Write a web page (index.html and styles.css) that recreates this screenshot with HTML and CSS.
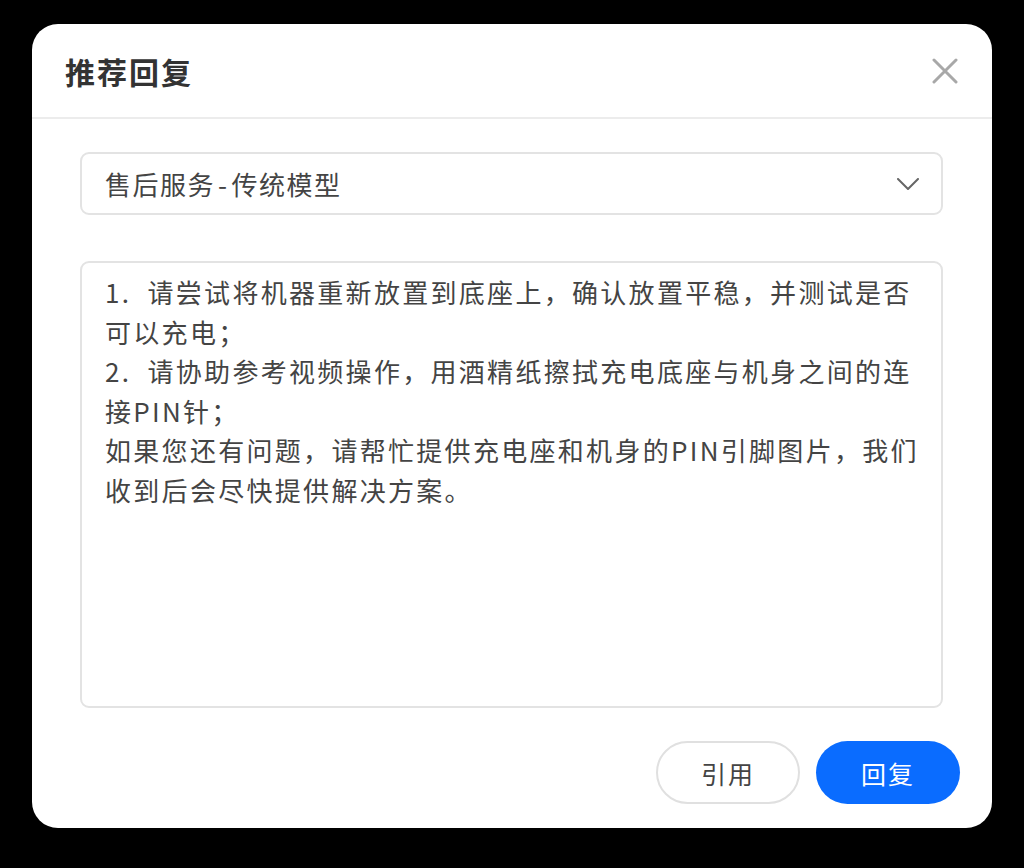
FILE: index.html
```html
<!DOCTYPE html>
<html lang="zh-CN">
<head>
<meta charset="utf-8">
<title>推荐回复</title>
<link rel="stylesheet" href="styles.css">
</head>
<body>
<div class="modal">
  <div class="modal-header">
    <h1 class="modal-title">推荐回复</h1>
    <button class="close-btn" aria-label="关闭">
      <svg width="26" height="26" viewBox="0 0 26 26"><path d="M2 2 L24 24 M24 2 L2 24" stroke="#a8a8a8" stroke-width="3" stroke-linecap="round" fill="none"/></svg>
    </button>
  </div>
  <div class="modal-body">
    <div class="select">
      <span class="select-value">售后服务<span class="dash">-</span>传统模型</span>
      <svg class="chevron" width="22" height="12" viewBox="0 0 22 12"><path d="M1 1 L11 11 L21 1" stroke="#666" stroke-width="2" fill="none" stroke-linecap="round" stroke-linejoin="round"/></svg>
    </div>
    <div class="reply-box">
      <p>1.&nbsp;&nbsp;请尝试将机器重新放置到底座上，确认放置平稳，并测试是否可以充电；</p>
      <p>2.&nbsp;&nbsp;请协助参考视频操作，用酒精纸擦拭充电底座与机身之间的连接PIN针；</p>
      <p>如果您还有问题，请帮忙提供充电座和机身的PIN引脚图片，我们收到后会尽快提供解决方案。</p>
    </div>
  </div>
  <div class="modal-footer">
    <button class="btn btn-default">引用</button>
    <button class="btn btn-primary">回复</button>
  </div>
</div>
</body>
</html>
```

FILE: styles.css
```css
html, body {
  margin: 0;
  padding: 0;
  background: #000;
}
body {
  width: 1024px;
  height: 868px;
  padding: 24px 32px 0 32px;
  box-sizing: border-box;
  font-family: "Noto Sans CJK SC", "Noto Sans", sans-serif;
}
.modal {
  width: 960px;
  height: 804px;
  background: #fff;
  border-radius: 26px;
  display: flex;
  flex-direction: column;
  box-sizing: border-box;
  overflow: hidden;
}
.modal-header {
  height: 95px;
  border-bottom: 2px solid #ececec;
  box-sizing: border-box;
  display: flex;
  align-items: center;
  justify-content: space-between;
  padding: 0 34px 0 33px;
}
.modal-title {
  margin: 0;
  font-size: 30px;
  font-weight: 700;
  color: #333;
  letter-spacing: 2px;
  line-height: 1;
}
.close-btn {
  border: 0;
  background: none;
  padding: 0;
  width: 26px;
  height: 26px;
  display: flex;
}
.modal-body {
  padding: 33px 49px 0 48px;
  display: flex;
  flex-direction: column;
  gap: 46px;
}
.select {
  height: 63px;
  border: 2px solid #e3e3e3;
  border-radius: 9px;
  box-sizing: border-box;
  display: flex;
  align-items: center;
  justify-content: space-between;
  padding: 0 22px 0 23px;
}
.select-value {
  font-size: 26px;
  letter-spacing: 1.5px;
  color: #444;
  line-height: 1;
}
.dash {
  margin: 0 3px;
}
.reply-box {
  height: 447px;
  border: 2px solid #e3e3e3;
  border-radius: 9px;
  box-sizing: border-box;
  padding: 9px 20px 0 23px;
  font-size: 26px;
  letter-spacing: 2.3px;
  line-height: 39.5px;
  color: #444;
}
.reply-box p {
  margin: 0;
}
.modal-footer {
  display: flex;
  justify-content: flex-end;
  gap: 16px;
  padding: 33px 32px 0 0;
}
.btn {
  width: 144px;
  height: 63px;
  border-radius: 32px;
  font-family: inherit;
  font-size: 25px;
  letter-spacing: 2px;
  box-sizing: border-box;
  cursor: pointer;
}
.btn-default {
  background: #fff;
  border: 2px solid #e0e0e0;
  color: #444;
}
.btn-primary {
  background: #0a6cff;
  border: 0;
  color: #fff;
}
```
